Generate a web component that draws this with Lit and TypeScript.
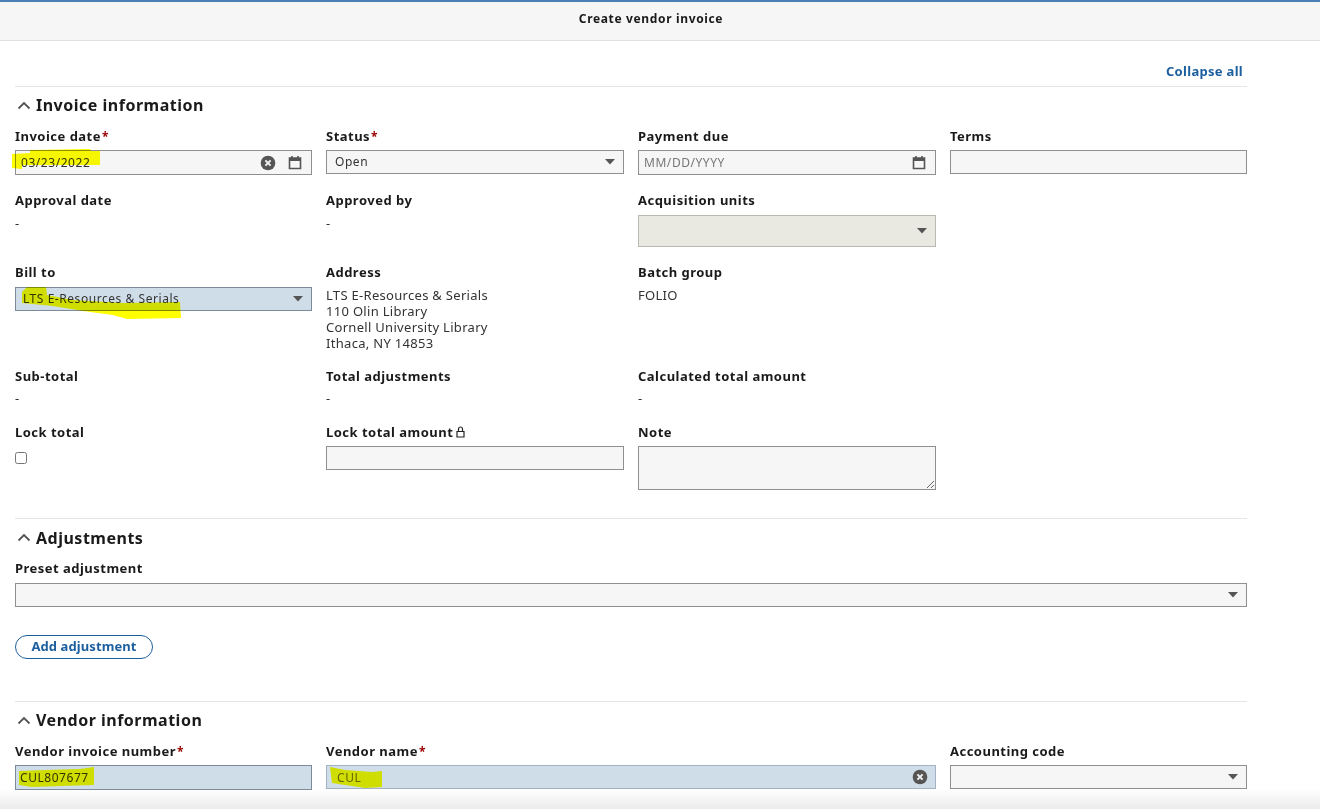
import { LitElement, html, css, svg } from 'lit';
import { customElement } from 'lit/decorators.js';

const clearIcon = html`<svg class="icon" width="16" height="16" viewBox="0 0 16 16">
    <circle cx="8" cy="8" r="7.3" fill="#555"></circle>
    <path d="M5.4 5.4l5.2 5.2M10.6 5.4l-5.2 5.2" stroke="#f2f2f2" stroke-width="2" fill="none"></path>
</svg>`;

const calendarIcon = html`<svg class="icon" width="14" height="15" viewBox="0 0 14 15">
    <path d="M1.5 3h11v10.5h-11z" fill="none" stroke="#555" stroke-width="1.6"></path>
    <path d="M1.5 3h11v3h-11z" fill="#555"></path>
    <path d="M4 1v3M10 1v3" stroke="#555" stroke-width="1.6"></path>
</svg>`;

const caret = html`<svg class="caret" width="12" height="6" viewBox="0 0 12 6">
    <path d="M1 0h10L6 5.5z" fill="#555"></path>
</svg>`;

const chevron = html`<svg class="chevron" width="14" height="9" viewBox="0 0 14 9">
    <path d="M1.5 7.5L7 2l5.5 5.5" fill="none" stroke="#555" stroke-width="1.8"></path>
</svg>`;

const lock = html`<svg class="lock" width="9" height="12" viewBox="0 0 9 12">
    <path d="M1 5.5h7v5.5h-7z" fill="none" stroke="#222" stroke-width="1.2"></path>
    <path d="M2.5 5.5V3a2 2 0 0 1 4 0v2.5" fill="none" stroke="#222" stroke-width="1.2"></path>
</svg>`;

// marker strokes someone painted over the screenshot
const strokes = [
    '12,154 30,153 30,150 90,149 91,151 100,151 100,165 22,165 22,169 12,168',
    '22,292 27,287 46,287 47,295 73,300 123,303 180,302 181,318 127,319 113,315 83,311 53,306 22,303',
    '19,771 45,770 80,769 94,767 94,785 60,786 32,787 19,785',
    '330,767 345,770 372,772 382,771 382,787 365,788 345,785 332,783',
];

@customElement('app-root')
export class AppRoot extends LitElement {
    static styles = css`
        :host {
            display: block;
            position: relative;
            width: 1320px;
            height: 809px;
            overflow: hidden;
            background: #fff;
            font-family: 'Noto Sans', sans-serif;
            font-size: 13px;
            letter-spacing: 0.3px;
            color: #333;
        }

        .pane-header {
            box-sizing: border-box;
            height: 41px;
            width: 1320px;
            padding: 0 18px 6px 0;
            border-top: 2px solid #4a80b5;
            border-bottom: 1px solid #e0e0e0;
            background: #f6f6f6;
            display: flex;
            align-items: center;
            justify-content: center;
            font-size: 12px;
            font-weight: 700;
            letter-spacing: 0.65px;
            color: #1a1a1a;
        }

        main {
            width: 1232px;
            margin-left: 15px;
        }

        .collapse-row {
            height: 45px;
            padding-top: 20px;
            box-sizing: border-box;
            display: flex;
            justify-content: flex-end;
            padding-right: 4px;
            line-height: 20px;
            font-weight: 700;
            letter-spacing: 0.3px;
            color: #1c5f9f;
        }

        section {
            border-top: 1px solid #e5e5e5;
        }

        h2 {
            box-sizing: border-box;
            margin: 0;
            height: 39px;
            padding-bottom: 3px;
            display: flex;
            align-items: center;
            gap: 5px;
            font-size: 16px;
            font-weight: 700;
            letter-spacing: 0.5px;
            color: #1a1a1a;
        }

        .adjustments h2 {
            padding-bottom: 2px;
        }

        .chevron {
            margin-left: 2px;
            flex: none;
        }

        .grid {
            display: grid;
            grid-template-columns: 297px 298px 298px 297px;
            column-gap: 14px;
            row-gap: 15px;
        }

        .label {
            height: 20px;
            line-height: 20px;
            margin-bottom: 5px;
            font-weight: 700;
            letter-spacing: 0.48px;
            color: #1a1a1a;
            white-space: nowrap;
            display: flex;
            align-items: center;
            gap: 3px;
        }

        .tight .label {
            margin-bottom: 4px;
        }

        .req {
            color: #900;
            margin-left: 1px;
            font-size: 12px;
        }

        .value {
            line-height: 16px;
        }

        .span2 {
            grid-column: span 2;
        }

        .span4 {
            grid-column: span 4;
        }

        .control {
            box-sizing: border-box;
            height: 24px;
            display: flex;
            align-items: center;
            padding: 0 7px 0 8px;
            border: 1px solid #8f8f8f;
            background: #f6f6f6;
            font-size: 12px;
            letter-spacing: 0.55px;
            color: #333;
        }

        .control span {
            flex: 1;
        }

        .control .lift {
            padding-bottom: 2px;
        }

        .date {
            height: 25px;
            padding: 0 9px 0 5px;
        }

        .blue {
            background: #cfdde9;
            border-color: #7c8a99;
            padding-left: 7px;
        }

        .blue.date {
            padding-left: 4px;
        }

        .soft {
            border-color: #a3b3c4;
            padding-left: 10px;
            color: #666;
        }

        .disabled {
            height: 32px;
            background: #e9e9e2;
            border-color: #b9b9b2;
        }

        .placeholder {
            color: #777;
        }

        .icon {
            flex: none;
            margin-left: 12px;
        }

        .caret {
            flex: none;
        }

        textarea {
            display: block;
            box-sizing: border-box;
            width: 100%;
            height: 44px;
            margin: 0;
            border: 1px solid #8f8f8f;
            border-radius: 0;
            background: #f6f6f6;
            outline: none;
        }

        input[type='checkbox'] {
            display: block;
            width: 12px;
            height: 12px;
            margin: 10px 0 0 0;
        }

        .adjustments {
            margin-top: 28px;
        }

        .button-row {
            margin-top: 28px;
            height: 66px;
        }

        button {
            box-sizing: border-box;
            width: 138px;
            height: 24px;
            padding: 0 0 2px;
            border: 1px solid #1c5f9f;
            border-radius: 12px;
            background: #fff;
            font: inherit;
            font-weight: 700;
            letter-spacing: 0.1px;
            color: #1c5f9f;
        }

        .row-gap {
            margin-top: 15px;
        }

        .row-gap-lock {
            margin-top: 16px;
        }

        .marker {
            position: absolute;
            top: 0;
            left: 0;
            mix-blend-mode: multiply;
            pointer-events: none;
        }

        .fade {
            position: absolute;
            left: 0;
            right: 0;
            bottom: 0;
            height: 20px;
            background: linear-gradient(rgba(235, 235, 235, 0), #ebebeb);
            pointer-events: none;
        }
    `;

    field(label: string, required = false, extra?: unknown) {
        return html`<div class="label">
            <span>${label}${required ? html`<span class="req">*</span>` : ''}</span>${extra ?? ''}
        </div>`;
    }

    render() {
        return html`
            <div class="pane-header">Create vendor invoice</div>
            <main>
                <div class="collapse-row">Collapse all</div>

                <section>
                    <h2>${chevron}Invoice information</h2>
                    <div class="grid tight">
                        <div>
                            ${this.field('Invoice date', true)}
                            <div class="control date"><span>03/23/2022</span>${clearIcon}${calendarIcon}</div>
                        </div>
                        <div>
                            ${this.field('Status', true)}
                            <div class="control"><span class="lift">Open</span>${caret}</div>
                        </div>
                        <div>
                            ${this.field('Payment due')}
                            <div class="control date">
                                <span class="placeholder">MM/DD/YYYY</span>${calendarIcon}
                            </div>
                        </div>
                        <div>
                            ${this.field('Terms')}
                            <div class="control"></div>
                        </div>
                    </div>
                    <div class="grid row-gap">
                        <div>${this.field('Approval date')}<div class="value">-</div></div>
                        <div>${this.field('Approved by')}<div class="value">-</div></div>
                        <div>
                            ${this.field('Acquisition units')}
                            <div class="control disabled"><span></span>${caret}</div>
                        </div>
                        <div></div>

                        <div>
                            ${this.field('Bill to')}
                            <div class="control blue">
                                <span class="lift">LTS E-Resources &amp; Serials</span>${caret}
                            </div>
                        </div>
                        <div>
                            ${this.field('Address')}
                            <div class="value">
                                LTS E-Resources &amp; Serials<br />110 Olin Library<br />Cornell University
                                Library<br />Ithaca, NY 14853
                            </div>
                        </div>
                        <div>${this.field('Batch group')}<div class="value">FOLIO</div></div>
                        <div></div>

                        <div class="tight">${this.field('Sub-total')}<div class="value">-</div></div>
                        <div class="tight">${this.field('Total adjustments')}<div class="value">-</div></div>
                        <div class="tight">${this.field('Calculated total amount')}<div class="value">-</div></div>
                        <div></div>
                    </div>
                    <div class="grid tight row-gap-lock">
                        <div>${this.field('Lock total')}<input type="checkbox" /></div>
                        <div>${this.field('Lock total amount', false, lock)}<div class="control"></div></div>
                        <div>${this.field('Note')}<textarea></textarea></div>
                    </div>
                </section>

                <section class="adjustments">
                    <h2>${chevron}Adjustments</h2>
                    <div class="grid">
                        <div class="span4">
                            ${this.field('Preset adjustment')}
                            <div class="control"><span></span>${caret}</div>
                        </div>
                    </div>
                    <div class="button-row"><button>Add adjustment</button></div>
                </section>

                <section>
                    <h2>${chevron}Vendor information</h2>
                    <div class="grid tight">
                        <div>
                            ${this.field('Vendor invoice number', true)}
                            <div class="control blue date"><span>CUL807677</span></div>
                        </div>
                        <div class="span2">
                            ${this.field('Vendor name', true)}
                            <div class="control blue soft"><span>CUL</span>${clearIcon}</div>
                        </div>
                        <div>
                            ${this.field('Accounting code')}
                            <div class="control"><span></span>${caret}</div>
                        </div>
                    </div>
                </section>
            </main>
            <svg class="marker" width="1320" height="809">
                ${strokes.map((p) => svg`<polygon points=${p} fill="#ffff00"></polygon>`)}
            </svg>
            <div class="fade"></div>
        `;
    }
}
